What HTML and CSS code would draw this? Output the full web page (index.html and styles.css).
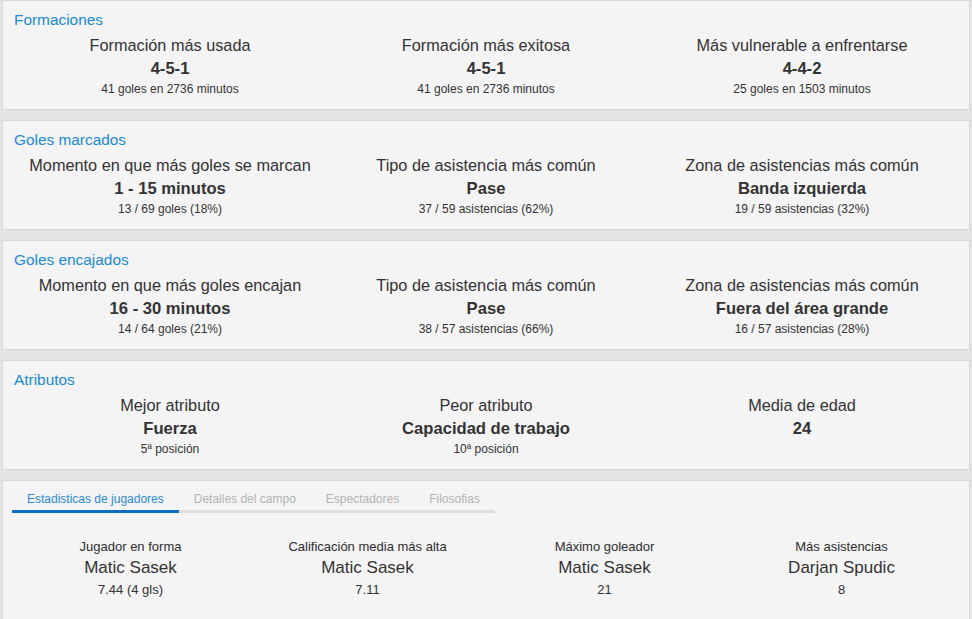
FILE: index.html
```html
<!DOCTYPE html>
<html lang="es">
<head>
<meta charset="utf-8">
<title>Estadísticas</title>
<link rel="stylesheet" href="styles.css">
</head>
<body>
<div class="page">
  <section class="card">
    <h2 class="card-title">Formaciones</h2>
    <div class="cols">
      <div class="col"><div class="label">Formación más usada</div><div class="value">4-5-1</div><div class="note">41 goles en 2736 minutos</div></div>
      <div class="col"><div class="label">Formación más exitosa</div><div class="value">4-5-1</div><div class="note">41 goles en 2736 minutos</div></div>
      <div class="col"><div class="label">Más vulnerable a enfrentarse</div><div class="value">4-4-2</div><div class="note">25 goles en 1503 minutos</div></div>
    </div>
  </section>
  <section class="card">
    <h2 class="card-title">Goles marcados</h2>
    <div class="cols">
      <div class="col"><div class="label">Momento en que más goles se marcan</div><div class="value">1 - 15 minutos</div><div class="note">13 / 69 goles (18%)</div></div>
      <div class="col"><div class="label">Tipo de asistencia más común</div><div class="value">Pase</div><div class="note">37 / 59 asistencias (62%)</div></div>
      <div class="col"><div class="label">Zona de asistencias más común</div><div class="value">Banda izquierda</div><div class="note">19 / 59 asistencias (32%)</div></div>
    </div>
  </section>
  <section class="card">
    <h2 class="card-title">Goles encajados</h2>
    <div class="cols">
      <div class="col"><div class="label">Momento en que más goles encajan</div><div class="value">16 - 30 minutos</div><div class="note">14 / 64 goles (21%)</div></div>
      <div class="col"><div class="label">Tipo de asistencia más común</div><div class="value">Pase</div><div class="note">38 / 57 asistencias (66%)</div></div>
      <div class="col"><div class="label">Zona de asistencias más común</div><div class="value">Fuera del área grande</div><div class="note">16 / 57 asistencias (28%)</div></div>
    </div>
  </section>
  <section class="card">
    <h2 class="card-title">Atributos</h2>
    <div class="cols">
      <div class="col"><div class="label">Mejor atributo</div><div class="value">Fuerza</div><div class="note">5ª posición</div></div>
      <div class="col"><div class="label">Peor atributo</div><div class="value">Capacidad de trabajo</div><div class="note">10ª posición</div></div>
      <div class="col"><div class="label">Media de edad</div><div class="value">24</div><div class="note">&nbsp;</div></div>
    </div>
  </section>
  <section class="card card-tabs">
    <nav class="tabs">
      <span class="tab active">Estadisticas de jugadores</span>
      <span class="tab">Detalles del campo</span>
      <span class="tab">Espectadores</span>
      <span class="tab">Filosofias</span>
    </nav>
    <div class="players">
      <div class="pcol"><div class="plabel">Jugador en forma</div><div class="pname">Matic Sasek</div><div class="pval">7.44 (4 gls)</div></div>
      <div class="pcol"><div class="plabel">Calificación media más alta</div><div class="pname">Matic Sasek</div><div class="pval">7.11</div></div>
      <div class="pcol"><div class="plabel">Máximo goleador</div><div class="pname">Matic Sasek</div><div class="pval">21</div></div>
      <div class="pcol"><div class="plabel">Más asistencias</div><div class="pname">Darjan Spudic</div><div class="pval">8</div></div>
    </div>
  </section>
</div>
</body>
</html>
```
FILE: styles.css
```css
html, body {
  margin: 0;
  padding: 0;
}
body {
  background: #e4e4e5;
  font-family: "Liberation Sans", Arial, sans-serif;
  color: #333;
}
.page {
  padding: 0 2px;
}
.card {
  background: #f4f4f4;
  border: 1px solid #d8d8d8;
  margin-bottom: 10px;
  padding: 10px 9px 11px;
}
.card-title {
  margin: 0;
  padding-left: 2px;
  font-size: 15.4px;
  line-height: 18px;
  font-weight: normal;
  color: #1b8ad3;
}
.cols {
  display: grid;
  grid-template-columns: repeat(3, 1fr);
  margin-top: 5px;
}
.col {
  text-align: center;
}
.label {
  font-size: 16.3px;
  line-height: 22px;
}
.value {
  font-size: 16.6px;
  line-height: 25px;
  font-weight: bold;
}
.note {
  font-size: 12px;
  line-height: 17px;
}
.card-tabs {
  padding-top: 11px;
  padding-bottom: 30px;
}
.tabs {
  display: flex;
}
.tab {
  font-size: 12px;
  line-height: 14px;
  padding: 0 15px 4px;
  color: #b3b3b3;
  border-bottom: 3px solid #dedede;
}
.tab.active {
  color: #2a8bd2;
  border-bottom-color: #0b6ec2;
}
.players {
  display: grid;
  grid-template-columns: repeat(4, 1fr);
  margin-top: 26px;
}
.pcol {
  text-align: center;
}
.plabel {
  font-size: 13px;
  line-height: 16px;
  color: #2e2e2e;
}
.pname {
  font-size: 17px;
  line-height: 26px;
}
.pval {
  font-size: 13px;
  line-height: 18px;
}
```
